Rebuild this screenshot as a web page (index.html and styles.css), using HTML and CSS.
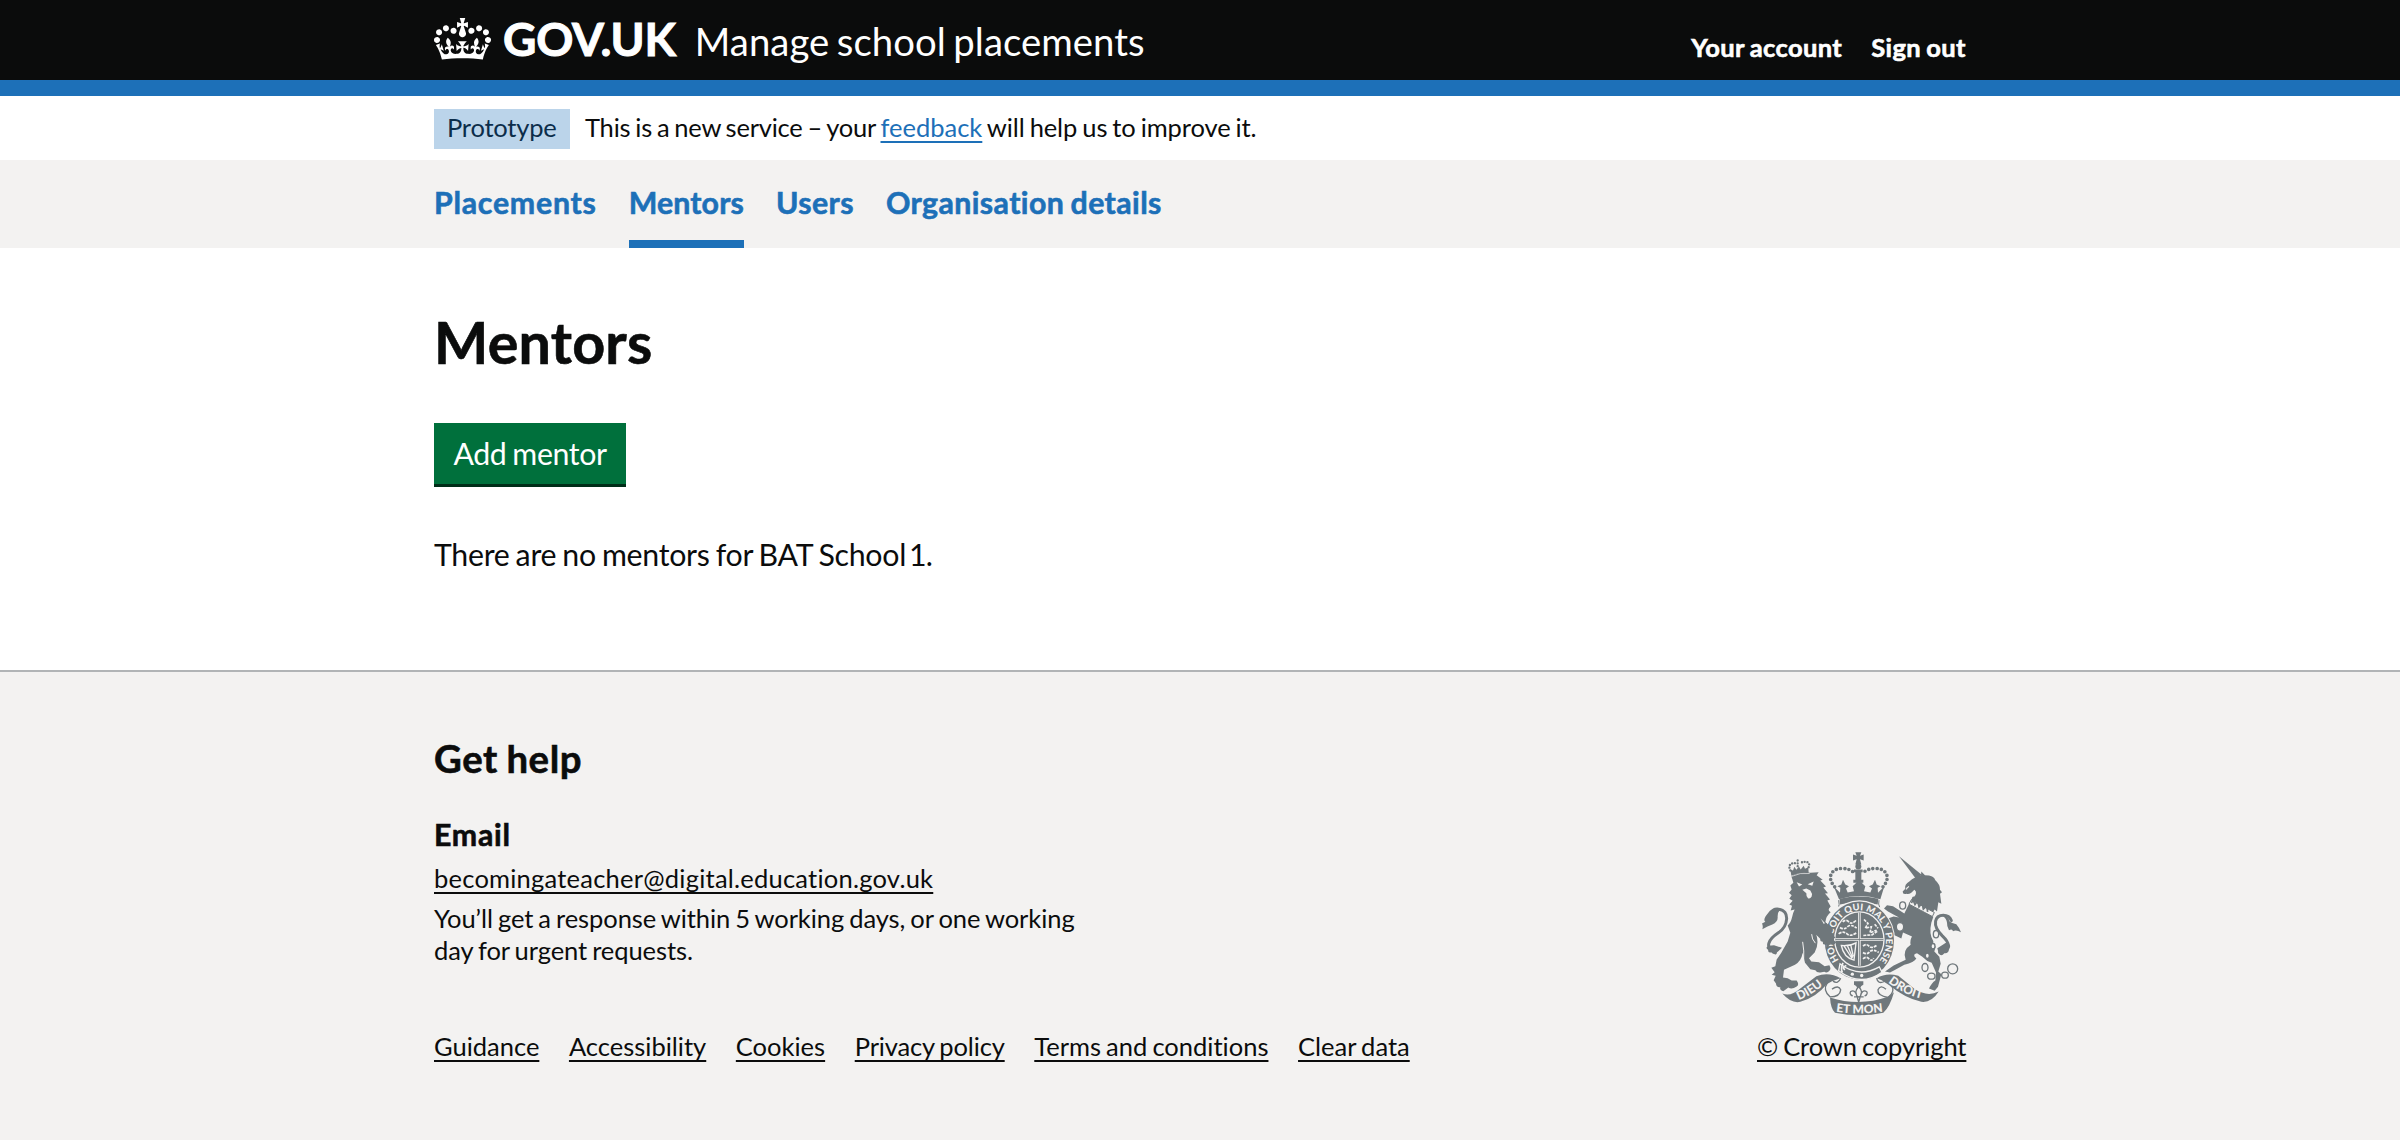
FILE: index.html
```html
<!DOCTYPE html>
<html lang="en">
<head>
<meta charset="utf-8">
<title>Mentors - Manage school placements - GOV.UK</title>
<link rel="stylesheet" href="styles.css">
</head>
<body>
<header class="header">
  <div class="container header-row">
    <svg class="crown" viewBox="0 0 132 97" aria-hidden="true"><path fill="currentColor" fill-rule="evenodd" d="M25 30.2c3.5 1.5 7.7-.2 9.1-3.7 1.5-3.6-.2-7.8-3.9-9.2-3.6-1.4-7.6.3-9.1 3.9-1.4 3.5.3 7.5 3.9 9zM9 39.5c3.6 1.5 7.8-.2 9.2-3.7 1.5-3.6-.2-7.8-3.9-9.1-3.6-1.5-7.6.2-9.1 3.8-1.4 3.5.3 7.5 3.8 9zM4.4 57.2c3.5 1.5 7.7-.2 9.1-3.8 1.5-3.6-.2-7.7-3.9-9.1-3.5-1.5-7.6.3-9.1 3.8-1.4 3.5.3 7.6 3.9 9.1zm38.3-21.4c3.5 1.5 7.7-.2 9.1-3.8 1.5-3.6-.2-7.7-3.9-9.1-3.6-1.5-7.6.3-9.1 3.8-1.3 3.6.4 7.7 3.9 9.1zm64.4-5.6c-3.6 1.5-7.8-.2-9.1-3.7-1.5-3.6.2-7.8 3.8-9.2 3.6-1.4 7.7.3 9.2 3.9 1.3 3.5-.4 7.5-3.9 9zm15.9 9.3c-3.6 1.5-7.7-.2-9.1-3.7-1.5-3.6.2-7.8 3.7-9.1 3.6-1.5 7.7.2 9.2 3.8 1.5 3.5-.3 7.5-3.8 9zm4.7 17.7c-3.6 1.5-7.8-.2-9.2-3.8-1.5-3.6.2-7.7 3.9-9.1 3.6-1.5 7.7.3 9.2 3.8 1.3 3.5-.4 7.6-3.9 9.1zM89.3 35.8c-3.6 1.5-7.8-.2-9.2-3.8-1.4-3.6.2-7.7 3.9-9.1 3.6-1.5 7.7.3 9.2 3.8 1.4 3.6-.3 7.7-3.9 9.1zM69.7 17.7l8.9 4.7V9.3l-8.9 2.8c-.2-.3-.5-.6-.9-.9L72.4 0H59.6l3.5 11.2c-.3.3-.6.5-.9.9l-8.8-2.8v13.1l8.8-4.7c.3.3.6.7.9.9l-5 15.4v.1c-.2.8-.4 1.6-.4 2.4 0 4.1 3.1 7.5 7 8.1h.2c.3 0 .7.1 1 .1.4 0 .7 0 1-.1h.2c4-.6 7.1-4.1 7.1-8.1 0-.8-.1-1.7-.4-2.4V34l-5.1-15.4c.4-.2.7-.6 1-.9zM66 92.8c16.9 0 32.8 1.1 47.1 3.2 4-16.9 8.9-26.7 14-33.5l-9.6-3.4c1 4.9 1.1 7.2 0 10.2-1.5-1.4-3-4.3-4.2-8.7L108.6 76c2.8-2 5-3.2 7.5-3.3-4.4 9.4-10 11.9-13.6 11.2-4.3-.8-6.3-4.6-5.6-7.9 1-4.7 5.7-5.9 8-.5 4.3-8.7-3-11.4-7.6-8.8 7.1-7.2 7.9-13.5 2.1-21.1-8 6.1-8.1 12.3-4.5 20.8-4.7-5.4-12.1-2.5-9.5 6.2 3.4-5.2 7.9-2 7.2 3.1-.6 4.3-6.4 7.8-13.5 7.2-10.3-.9-10.9-8-11.2-13.8 2.5-.5 7.1 1.8 11 7.3L80.2 60c-4.1 4.4-8 5.3-12.3 5.4 1.4-4.4 8-11.6 8-11.6H55.5s6.4 7.2 7.9 11.6c-4.2-.1-8-1-12.3-5.4l1.4 16.4c3.9-5.5 8.5-7.7 10.9-7.3-.3 5.8-.9 12.8-11.1 13.8-7.2.6-12.9-2.9-13.5-7.2-.7-5 3.8-8.3 7.1-3.1 2.7-8.7-4.6-11.6-9.4-6.2 3.7-8.5 3.6-14.7-4.6-20.8-5.8 7.6-5 13.9 2.2 21.1-4.7-2.6-11.9.1-7.7 8.8 2.3-5.5 7.1-4.2 8.1.5.7 3.3-1.3 7.1-5.7 7.9-3.5.7-9-1.8-13.5-11.2 2.5.1 4.7 1.3 7.5 3.3l-4.7-15.4c-1.2 4.4-2.7 7.2-4.3 8.7-1.1-3-.9-5.3 0-10.2l-9.5 3.4c5 6.9 9.9 16.7 14 33.5 14.8-2.1 30.8-3.2 47.7-3.2z"/></svg>
    <a class="logotype" href="#">GOV.UK</a>
    <a class="service" href="#">Manage school placements</a>
    <nav class="account"><a href="#">Your account</a><a href="#">Sign out</a></nav>
  </div>
</header>
<div class="container phase">
  <strong class="tag">Prototype</strong>
  <span><span class="intro">This is a new service – your </span><a class="link" href="#">feedback</a> will help us to improve it.</span>
</div>
<nav class="primary">
  <div class="container primary-list">
    <a class="placements" href="#">Placements</a>
    <a class="mentors current" href="#">Mentors</a>
    <a class="users" href="#">Users</a>
    <a class="organisation" href="#">Organisation details</a>
  </div>
</nav>
<main class="container main">
  <h1>Mentors</h1>
  <a class="button" href="#">Add mentor</a>
  <p class="empty">There are no mentors for BAT School<span class="digit"> 1.</span></p>
</main>
<footer class="footer">
  <div class="container footer-row">
    <div class="help">
      <h2>Get help</h2>
      <h3>Email</h3>
      <a class="link email" href="#">becomingateacher@digital.education.gov.uk</a>
      <p class="response">You’ll get a response within 5 working days, or one working day for urgent requests.</p>
      <div class="links">
        <a class="link" href="#">Guidance</a>
        <a class="link" href="#">Accessibility</a>
        <a class="link" href="#">Cookies</a>
        <a class="link tight" href="#">Privacy policy</a>
        <a class="link" href="#">Terms and conditions</a>
        <a class="link" href="#">Clear data</a>
      </div>
    </div>
    <div class="copyright">
      <svg class="arms" viewBox="51 30 627 500" aria-hidden="true">
        <defs>
          <path id="garter" d="M297 360A80 91 0 1 1 406 374"/>
          <path id="left-scroll" d="M176 480Q220 463 262 424"/>
          <path id="mid-scroll" d="M288 515Q358 525 432 514"/>
          <path id="right-scroll" d="M444 427Q490 464 556 478"/>
        </defs>
        <!-- royal crown -->
        <g fill="currentColor">
          <path d="M346 36h18l-4 11 11-4v18l-11-4 4 16h-18l4-16-11 4V43l11 4z"/>
          <circle cx="355" cy="79" r="9"/>
          <path d="M342 88h26v8h-4v23h6v9h-30v-9h6V96h-4z"/>
          <path d="M281 138l19 20 1-15-9-5 12-5 5-14 7 14 11 5-9 7 5 12 19-4-4-15 8-7 11-14 11 14 8 7-4 15 19 4 5-12-9-7 11-5 7-14 5 14 12 5-9 5 1 15 19-20-12 39q-62-19-124 0z"/>
          <path d="M299 176q57-14 116 0l-2 17q-57-15-113 0z"/>
        </g>
        <g fill="none" stroke="currentColor" stroke-width="11" stroke-linecap="round" stroke-dasharray="0 12.6">
          <path d="M284 140C258 110 276 86 303 85Q327 84 340 96"/>
          <path d="M429 140C455 110 437 86 410 85Q386 84 371 96"/>
        </g>
        <path d="M296 180Q299 196 296 199M417 180Q414 193 419 201" fill="none" stroke="currentColor" stroke-width="3"/>
        <!-- tails -->
        <g fill="none" stroke="currentColor" stroke-width="9" stroke-linecap="round">
          <path d="M106 338C72 322 85 298 115 278C145 258 151 211 116 207Q99 205 95 218"/>
          <path d="M599 336C633 322 630 309 607 287C573 253 586 225 610 225Q628 225 634 241"/>
        </g>
        <g fill="currentColor">
          <path d="M123 206Q96 200 85 218Q67 239 76 245L66 250Q70 258 67 267Q83 258 97 253Q114 245 113 231Q112 215 123 206z"/>
          <path d="M606 226Q625 225 629 244Q635 249 649 252Q657 261 663 276Q649 268 639 273Q637 265 627 270Q620 258 621 248Q620 235 606 226z"/>
          <path d="M86 317Q74 322 84 329Q84 340 95 336Q100 347 115 333L126 323 102 315z"/>
          <path d="M620 306Q637 313 627 328Q625 341 613 339Q604 351 596 340L592 324z"/>
        </g>
        <!-- lion -->
        <path fill="currentColor" d="M154 108Q180 92 211 98L236 96 230 105 248 119 241 121 258 139 250 142 264 159 255 160 270 178 262 181 272 199Q260 210 272 216Q258 227 256 246L280 266 273 277 286 293 277 297 289 306Q279 319 272 310L262 322Q256 318 259 312Q247 316 249 305Q236 304 243 293L229 284Q238 312 224 337L207 354 214 364 237 366 254 378 268 375Q274 385 269 391Q261 401 253 395L241 397Q230 398 226 390L211 387 195 368 188 338Q184 363 165 374L132 389 129 412 143 414 155 421 170 421Q179 433 170 439Q155 449 145 442L130 453Q118 450 121 441Q108 442 108 430L101 420 107 407 95 404 104 396 94 383 106 378 110 358 123 339 143 304 151 278 143 256Q152 249 156 232Q159 217 164 208L152 211 156 197 148 193 158 182 148 176 155 165 147 158 155 148 151 136 160 128 157 117z"/>
        <path fill="currentColor" d="M154 107L151 88l8 3 4-11 6 9 8-10 5 9 9-11 4 9 10-5 1 18Q180 95 154 107z"/>
        <g fill="none" stroke="currentColor" stroke-width="7" stroke-linecap="round" stroke-dasharray="0 8.5"><path d="M151 91C143 75 152 66 171 70M206 81C212 66 200 61 180 68M173 61V84"/></g>
        <path d="M154 109Q180 96 209 100" fill="none" stroke="#f3f2f1" stroke-width="2"/>
        <g fill="#f3f2f1">
          <path d="M170 126l17 7-10 6zM203 132l18-8-4 13zM187 149l12-4 12 6q7 9 4 18-5 8-11 5-6-4-5-15z"/>
          <path d="M242 235l17 18-7-1z"/>
        </g>
        <path d="M188 305Q193 333 191 358M215 282Q215 297 226 309" fill="none" stroke="#f3f2f1" stroke-width="3"/>
        <!-- unicorn -->
        <g fill="currentColor">
          <path d="M477 48L545 104 530 119z"/>
          <path d="M543 106L544 94 555 105Q582 105 586 120Q601 133 600 149L606 156 600 161 604 191 595 186 591 214 584 208 574 223 512 181 520 170Q533 158 523 149Q510 165 499 161Q488 164 488 154L496 146Q492 133 509 123Q522 111 543 106z"/>
          <path d="M509 187L580 230 574 248Q566 283 580 303L579 314 587 319 583 334 598 350 602 371 595 394 604 402 594 440 584 452 567 445Q575 428 586 421L588 397 575 368Q560 364 547 350L531 339Q515 342 529 355Q523 366 493 374L463 390 450 397 435 394 461 376 497 359Q486 331 512 314Q509 300 516 289L489 277 484 295 467 287Q451 285 455 266L441 256 445 242 437 237 461 229 477 232 444 214 432 205 441 195 459 198 493 220z"/>
        </g>
        <path d="M514 179L583 217 577 229 507 192z" fill="#f3f2f1" stroke="currentColor" stroke-width="3"/>
        <path d="M515 189l3-12 7 16 8-11 4 18 9-11 4 18 10-10 3 18" fill="none" stroke="currentColor" stroke-width="5"/>
        <path d="M507 139q-7 3-8 9M523 151q6 10-2 17" fill="none" stroke="#f3f2f1" stroke-width="4"/>
        <!-- chain -->
        <g fill="#f3f2f1" stroke="currentColor" stroke-width="4">
          <ellipse cx="488" cy="196" rx="9" ry="11"/><ellipse cx="480" cy="260" rx="11" ry="13"/>
          <ellipse cx="588" cy="282" rx="8" ry="11"/><ellipse cx="579" cy="318" rx="6" ry="8"/><ellipse cx="562" cy="347" rx="6" ry="8"/>
          <ellipse cx="555" cy="382" rx="9" ry="12"/><ellipse cx="574" cy="408" rx="11" ry="9"/>
          <ellipse cx="615" cy="405" rx="10" ry="9"/><circle cx="638" cy="386" r="15"/>
        </g>
        <!-- garter and shield -->
        <ellipse cx="358" cy="301" rx="107" ry="121" fill="#f3f2f1"/>
        <ellipse cx="358" cy="301" rx="104" ry="117" fill="currentColor"/>
        <ellipse cx="358" cy="298" rx="76" ry="85" fill="#f3f2f1"/>
        <ellipse cx="358" cy="298" rx="72" ry="81" fill="currentColor"/>
        <g fill="none" stroke="#f3f2f1">
          <path d="M358 217V377M286 298H430" stroke-width="8"/>
          <path d="M308 245q10-9 18 0t22-4M300 262q12 8 22-2t28 4M296 281q14-10 25 0t30-4M372 238l12 12-8 14 18-4-4 18 20-8M370 286l26-2 18-12M404 252l10 12M369 318q10-9 18 0t25-4M369 337q12 8 20-2t27 2M369 356q10-9 18 0t14-2" stroke-width="5" stroke-dasharray="9 3"/>
          <path d="M304 316q26 2 44-8l-6 52q-31-8-38-44zM312 317l24 38M322 316l16 37M332 313l8 36" stroke-width="4"/>
        </g>
        <path d="M358 217V377M286 298H430" fill="none" stroke="currentColor" stroke-width="2.5"/>
        <path d="M300 371Q356 415 418 380L426 396Q362 442 296 392z" fill="currentColor" stroke="#f3f2f1" stroke-width="4"/>
        <circle cx="337" cy="402" r="5" fill="#f3f2f1"/><circle cx="365" cy="406" r="5" fill="#f3f2f1"/>
        <path d="M309 368q-8 18-2 29M319 376q-15 6-4 13" fill="none" stroke="#f3f2f1" stroke-width="5"/>
        <text class="garter-text"><textPath href="#garter" textLength="396" lengthAdjust="spacing">HONI SOIT QUI MAL Y PENSE</textPath></text>
        <path fill="currentColor" d="M229 284L256 246 280 266 273 277 286 293 277 297 289 306Q279 319 272 310L262 322Q256 318 259 312Q247 316 249 305z"/>
        <!-- fleur-de-lis -->
        <path fill="currentColor" d="M342 423h28v11q-7 2-10 10h-8q-2-8-10-10z"/>
        <g fill="#f3f2f1" stroke="currentColor" stroke-width="4">
          <path d="M356 439q16 18 3 32h-6q-13-14 3-32z"/>
          <path d="M351 469q-5-23-19-15-5 8 6 13-6-1-5-3M361 469q5-23 19-15 5 8-6 13 6-1 5-3M342 470h29M352 472l4 14 4-14"/>
        </g>
        <!-- motto scroll -->
        <g fill="currentColor">
          <path d="M127 460Q151 471 180 446L229 408Q266 394 302 414L276 423 260 432Q230 470 181 485Q154 491 127 460z"/>
          <path d="M410 414Q440 396 475 407L523 446Q562 472 596 454Q574 489 544 485Q494 473 448 435L425 420z"/>
          <path d="M270 472Q358 500 444 470L462 456Q450 499 430 518Q358 533 285 518Q272 506 270 472z"/>
        </g>
        <path d="M262 428Q247 449 270 470Q300 470 302 449Q296 433 276 447M302 414Q294 433 279 423M450 432Q470 450 444 472Q412 466 414 449Q421 432 438 447M410 414Q413 433 433 424" fill="none" stroke="currentColor" stroke-width="4"/>
        <text class="motto"><textPath href="#left-scroll">DIEU</textPath></text>
        <text class="motto"><textPath href="#mid-scroll">ET MON</textPath></text>
        <text class="motto"><textPath href="#right-scroll">DROIT</textPath></text>
      </svg>
      <a class="link" href="#">© Crown copyright</a>
    </div>
  </div>
</footer>
</body>
</html>
```
FILE: styles.css
```css
* { box-sizing: border-box; }
body {
  margin: 0;
  min-height: 1140px;
  display: flex;
  flex-direction: column;
  background: #fff;
  color: #0b0c0c;
  font: 25.5px/32px Lato, "Open Sans", sans-serif;
  font-variant-ligatures: none;
  word-spacing: -1.4px;
}
h1, h2, h3, p { margin: 0; }
h1, h2, h3, .account, .primary { -webkit-text-stroke: 0.6px currentColor; }
a { color: inherit; text-decoration: none; white-space: nowrap; }
.link {
  text-decoration: underline;
  text-decoration-thickness: 2px;
  text-underline-offset: 4px;
  text-decoration-skip-ink: none;
}
.container { width: 1532px; margin: 0 auto; }

.header { height: 96px; background: #0b0c0c; border-bottom: 16px solid #1d70b8; color: #fff; }
.header-row { display: flex; align-items: baseline; padding-top: 15.6px; }
.crown { width: 57px; height: 42px; margin: 2.1px 12px 0 0; align-self: flex-start; }
.logotype { font-size: 46px; font-weight: 700; line-height: 46px; margin-right: 19px; letter-spacing: -0.2px; -webkit-text-stroke: 1px currentColor; }
.service { font-size: 38.3px; line-height: 48px; word-spacing: -2.4px; letter-spacing: 0.05px; }
.account {
  display: flex;
  gap: 29px;
  align-self: flex-start;
  margin-left: auto;
  padding-top: 15.5px;
  font-weight: 700;
  letter-spacing: 0.4px;
}

.phase { display: flex; align-items: baseline; gap: 15px; height: 64px; padding-top: 12.5px; letter-spacing: -0.1px; }
.tag { padding: 2px 13px 6px; width: 136px; background: #bbd4ea; color: #0c2d4a; font-weight: 400; letter-spacing: -0.2px; }
.intro { letter-spacing: -0.22px; }
.phase .link { color: #1d70b8; letter-spacing: 0; }

.primary { height: 88px; background: #f3f2f1; color: #1d70b8; font-size: 30.3px; font-weight: 700; line-height: 85px; }
.primary-list { display: flex; gap: 32px; }
.primary-list a { height: 88px; }
.placements { letter-spacing: 0.75px; }
.mentors { letter-spacing: 0.15px; }
.users { letter-spacing: 0.4px; }
.organisation { letter-spacing: 0.4px; }
.current { box-shadow: inset 0 -8px #1d70b8; }

.main { padding: 63.5px 0 96.5px; }
h1 { font-size: 57.5px; line-height: 60px; margin-bottom: 51.5px; letter-spacing: 0.2px; }
.button {
  display: block;
  width: 192px;
  padding-left: 19.5px;
  background: #00703c;
  box-shadow: 0 3px #002d18;
  color: #fff;
  font-size: 30.3px;
  line-height: 60.5px;
  letter-spacing: -0.4px;
}
.empty { margin-top: 50.3px; font-size: 30.3px; line-height: 40px; letter-spacing: -0.28px; }
.digit { word-spacing: -4px; letter-spacing: -0.8px; }

.footer { flex: 1; background: #f3f2f1; border-top: 2px solid #b1b4b6; }
.footer-row { display: flex; justify-content: space-between; align-items: flex-end; padding-top: 65.5px; }
h2 { font-size: 38.3px; line-height: 40px; margin-bottom: 36.5px; letter-spacing: 0.6px; }
h3 { font-size: 30.3px; line-height: 40px; margin-bottom: 8px; letter-spacing: 0.75px; }
.email { display: block; width: max-content; margin-bottom: 8px; letter-spacing: 0.23px; }
.response { width: 660px; margin-bottom: 63.8px; letter-spacing: -0.07px; }
.links { display: flex; gap: 29.6px; letter-spacing: 0; }
.tight { letter-spacing: -0.15px; }
.copyright { width: 209px; display: flex; flex-direction: column; gap: 13px; letter-spacing: -0.1px; }
.arms { width: 209px; height: 167px; color: #6f777b; }
.garter-text, .motto { fill: #f3f2f1; font-weight: 900; letter-spacing: 0; word-spacing: 0; }
.garter-text { font-size: 28px; }
.motto { font-size: 36px; }
```
